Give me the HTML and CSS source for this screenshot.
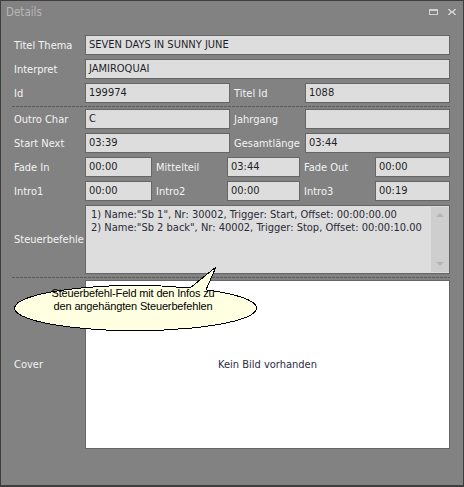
FILE: index.html
```html
<!DOCTYPE html>
<html lang="de">
    <head>
        <meta charset="UTF-8">
        <title>Details</title>
        <link rel="stylesheet" href="styles.css">
    </head>
    <body>
        <div class="window">
            <div class="titlebar">
                <span class="title">Details</span>
                <span class="btn-max"></span>
                <svg class="btn-close" width="8" height="6" viewBox="0 0 8 6">
                    <path d="M0 0h2v1h-2zM6 0h2v1h-2zM1 1h2v1h-2zM5 1h2v1h-2zM2 2h4v2h-4zM1 4h2v1h-2zM5 4h2v1h-2zM0 5h2v1h-2zM6 5h2v1h-2z" fill="#d2d2d2"/>
                </svg>
            </div>

            <div class="details">
                <div class="row full">
                    <span class="label">Titel Thema</span>
                    <span class="field">SEVEN DAYS IN SUNNY JUNE</span>
                </div>
                <div class="row full">
                    <span class="label">Interpret</span>
                    <span class="field">JAMIROQUAI</span>
                </div>
                <div class="row pair">
                    <span class="label">Id</span>
                    <span class="field">199974</span>
                    <span class="label second">Titel Id</span>
                    <span class="field">1088</span>
                </div>

                <div class="divider"></div>

                <div class="row pair">
                    <span class="label">Outro Char</span>
                    <span class="field">C</span>
                    <span class="label second">Jahrgang</span>
                    <span class="field"></span>
                </div>
                <div class="row pair">
                    <span class="label">Start Next</span>
                    <span class="field">03:39</span>
                    <span class="label second">Gesamtlänge</span>
                    <span class="field">03:44</span>
                </div>
                <div class="row triple">
                    <span class="label">Fade In</span>
                    <span class="field">00:00</span>
                    <span class="label second">Mittelteil</span>
                    <span class="field">03:44</span>
                    <span class="label second">Fade Out</span>
                    <span class="field">00:00</span>
                </div>
                <div class="row triple">
                    <span class="label">Intro1</span>
                    <span class="field">00:00</span>
                    <span class="label second">Intro2</span>
                    <span class="field">00:00</span>
                    <span class="label second">Intro3</span>
                    <span class="field">00:19</span>
                </div>

                <div class="row commands">
                    <span class="label">Steuerbefehle</span>
                    <div class="memo">
                        <div class="memo-text">
                            1) Name:"Sb 1", Nr: 30002, Trigger: Start, Offset: 00:00:00.00<br>
                            2) Name:"Sb 2 back", Nr: 40002, Trigger: Stop, Offset: 00:00:10.00
                        </div>
                        <div class="scrollbar">
                            <span class="arrow up"></span>
                            <span class="arrow down"></span>
                        </div>
                    </div>
                </div>

                <div class="divider"></div>

                <div class="row cover">
                    <span class="label">Cover</span>
                    <div class="picture">Kein Bild vorhanden</div>
                </div>
            </div>

            <!-- Sprechblase über dem Formular -->
            <div class="balloon">
                <svg width="260" height="75" viewBox="0 0 260 75">
                    <path d="M190 28 L216 7 L206 29.8 A121 22.5 0 1 1 190 28 Z" fill="#ffffe1" stroke="#000" stroke-width="1" shape-rendering="crispEdges"/>
                </svg>
                <p class="balloon-text">Steuerbefehl-Feld mit den Infos zu<br>den angehängten Steuerbefehlen</p>
            </div>
        </div>
    </body>
</html>
```

FILE: styles.css
```css
body{
    margin: 0;
    font-family: "DejaVu Sans Condensed", "DejaVu Sans", sans-serif;
    font-stretch: condensed;
    font-size: 11px;
}

.window{
    position: relative;
    box-sizing: border-box;
    width: 464px;
    height: 487px;
    background-color: #828282;
    border: 1px solid #3e3e3e;
    border-bottom-width: 2px;
}

/* Titelleiste */
.titlebar{
    display: flex;
    align-items: center;
    height: 22px;
    padding: 0 7px 0 5px;
}

.title{
    flex: 1;
    color: #b6b6b6;
    font-size: 11.5px;
}

.btn-max{
    box-sizing: border-box;
    width: 9px;
    height: 6px;
    border: 1px solid #d2d2d2;
    border-top-width: 2px;
    margin-right: 10px;
}

.btn-close{
    display: block;
}

/* Formular */
.details{
    display: flex;
    flex-direction: column;
    gap: 4px;
    padding: 12px 13px 0 13px;
}

.row{
    display: grid;
    align-items: center;
    height: 20px;
}

.full{
    grid-template-columns: 71px 1fr;
}

.pair{
    grid-template-columns: 71px 145px 75px 1fr;
}

.triple{
    grid-template-columns: 71px 67px 75px 73px 75px 1fr;
}

.label{
    color: #f3f3f3;
    white-space: nowrap;
}

.second{
    padding-left: 4px;
}

.field{
    box-sizing: border-box;
    height: 20px;
    line-height: 18px;
    padding-left: 3px;
    background-color: #dddddd;
    border: 1px solid #666;
    color: #1f1f28;
    white-space: nowrap;
    overflow: hidden;
}

.divider{
    height: 1px;
    margin: -1px 0 -2px -2px;
    background: repeating-linear-gradient(90deg, #5c5c5c 0 3px, transparent 3px 4px);
}

.commands{
    height: 69px;
    grid-template-columns: 71px 1fr;
}

.memo{
    box-sizing: border-box;
    display: flex;
    height: 69px;
    background-color: #dddddd;
    border: 1px solid #666;
}

.memo-text{
    flex: 1;
    padding: 2px 0 0 5px;
    line-height: 13px;
    color: #2a2a38;
    white-space: nowrap;
}

.scrollbar{
    position: relative;
    width: 18px;
    margin: 1px 0;
    background-color: #cecece;
}

.arrow{
    position: absolute;
    left: 5px;
    width: 0;
    height: 0;
    border-left: 4px solid transparent;
    border-right: 4px solid transparent;
}

.arrow.up{
    top: 6px;
    border-bottom: 4px solid #b4b4b4;
}

.arrow.down{
    bottom: 6px;
    border-top: 4px solid #b4b4b4;
}

.cover{
    height: 169px;
    grid-template-columns: 71px 1fr;
}

.picture{
    box-sizing: border-box;
    display: flex;
    align-items: center;
    justify-content: center;
    height: 169px;
    background-color: #fff;
    border: 1px solid #666;
    color: #2c2c44;
}

/* Sprechblase */
.balloon{
    position: absolute;
    left: -1px;
    top: 259px;
    width: 260px;
    height: 75px;
}

.balloon svg{
    display: block;
}

.balloon-text{
    position: absolute;
    left: 12px;
    top: 27px;
    width: 242px;
    margin: 0;
    font-family: "Liberation Sans", Arial, sans-serif;
    font-stretch: normal;
    font-size: 11px;
    letter-spacing: -0.15px;
    line-height: 13px;
    text-align: center;
    color: #000;
}
```
